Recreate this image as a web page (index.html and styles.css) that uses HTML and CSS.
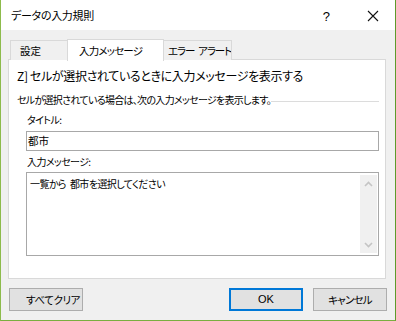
FILE: index.html
```html
<!DOCTYPE html>
<html lang="ja">
<head>
<meta charset="utf-8">
<link rel="stylesheet" href="styles.css">
</head>
<body>
<div class="window">
  <div class="titlebar">
    <span class="title">データの入力規則</span>
    <span class="help">?</span>
    <span class="close">
      <svg width="12" height="12" viewBox="0 0 12 12"><path d="M1 1 L11 11 M11 1 L1 11" stroke="#111" stroke-width="1.1" fill="none"/></svg>
    </span>
  </div>
  <div class="content">
    <div class="tabs">
      <div class="tab">設定</div>
      <div class="tab active">入力メッセージ</div>
      <div class="tab">エラー<span class="gap"> </span>アラート</div>
    </div>
    <div class="panel">
      <div class="check">Z] セルが選択されているときに入力メッセージを表示する</div>
      <div class="group"><span>セルが選択されている場合は、次の入力メッセージを表示します。</span><i class="rule"></i></div>
      <div class="label">タイトル:</div>
      <div class="input">都市</div>
      <div class="label label2">入力メッセージ:</div>
      <div class="textarea">
        <div class="ta-text">一覧から<span class="gap"> </span>都市を選択してください</div>
        <div class="scroll">
          <svg width="9" height="6" viewBox="0 0 9 6"><polyline points="1,5 4.5,1.5 8,5" stroke="#c4c4c4" stroke-width="1.6" fill="none"/></svg>
          <svg width="9" height="6" viewBox="0 0 9 6"><polyline points="1,1 4.5,4.5 8,1" stroke="#c4c4c4" stroke-width="1.6" fill="none"/></svg>
        </div>
      </div>
    </div>
    <div class="buttons">
      <div class="btn clear">すべてクリア</div>
      <div class="spacer"></div>
      <div class="btn ok">OK</div>
      <div class="btn cancel">キャンセル</div>
    </div>
  </div>
</div>
</body>
</html>
```
FILE: styles.css
```css
html, body {
  margin: 0;
  padding: 0;
}
body {
  width: 396px;
  height: 321px;
  overflow: hidden;
  font-family: "Noto Sans CJK JP", "Noto Sans", sans-serif;
  font-feature-settings: "palt";
  color: #000;
}
.window {
  box-sizing: border-box;
  width: 396px;
  height: 321px;
  border-left: 1px solid #8dbb4c;
  border-right: 1px solid #5f9a2a;
  border-bottom: 1px solid #7aae3f;
  display: flex;
  flex-direction: column;
  background: #f0f0f0;
}
.titlebar {
  height: 30px;
  background: #fff;
  display: flex;
  align-items: center;
  flex: none;
}
.title {
  font-size: 11px;
  letter-spacing: -0.3px;
  margin-left: 10px;
  flex: 1;
  line-height: 1;
  padding-top: 1px;
  white-space: nowrap;
}
.help {
  font-family: "Liberation Sans", sans-serif;
  font-size: 13px;
  margin-right: 37px;
  padding-top: 2px;
}
.close {
  display: flex;
  margin-right: 16px;
  padding-top: 2px;
}
.content {
  flex: 1;
  display: flex;
  flex-direction: column;
  padding: 9px 9px 0 7px;
}
.tabs {
  display: flex;
  height: 21px;
  padding-left: 2px;
  align-items: flex-end;
  position: relative;
  z-index: 1;
  margin-bottom: -1px;
}
.tab {
  box-sizing: border-box;
  height: 20px;
  border: 1px solid #d9d9d9;
  border-bottom: none;
  background: #f0f0f0;
  font-size: 10.5px;
  letter-spacing: -0.8px;
  line-height: 19px;
  padding: 0 8px;
  white-space: nowrap;
  overflow: hidden;
}
.tab:first-child {
  width: 57px;
  padding-left: 9px;
  border-right: none;
  letter-spacing: 0;
}
.tab.active {
  height: 22px;
  width: 97px;
  background: #fff;
  padding-left: 11px;
  margin-bottom: -1px;
  line-height: 21px;
}
.tab:last-child {
  width: 68px;
  border-left: none;
  padding-left: 4px;
  padding-right: 0;
  letter-spacing: -1.1px;
}
.panel {
  box-sizing: border-box;
  height: 220px;
  width: 378px;
  background: #fff;
  border: 1px solid #d9d9d9;
  display: flex;
  flex-direction: column;
  padding: 0 6px 0 8px;
}
.check {
  font-size: 12px;
  letter-spacing: -0.35px;
  margin-top: 7px;
  line-height: 17px;
  height: 17px;
  white-space: nowrap;
}
.group {
  display: flex;
  align-items: center;
  font-size: 10px;
  letter-spacing: -0.7px;
  margin-top: 9px;
  line-height: 14px;
  height: 14px;
  white-space: nowrap;
}
.rule {
  flex: 1;
  border-top: 1px solid #dcdcdc;
  margin-top: 2px;
}
.label {
  font-size: 10px;
  letter-spacing: -0.6px;
  line-height: 14px;
  margin: 6px 0 0 10px;
  height: 14px;
}
.input {
  box-sizing: border-box;
  margin: 4px 0 0 9px;
  height: 20px;
  border: 1px solid #a8a8a8;
  font-size: 10.5px;
  line-height: 18px;
  padding-left: 1px;
}
.label2 {
  margin-top: 4px;
}
.textarea {
  box-sizing: border-box;
  margin: 3px 0 0 9px;
  height: 84px;
  border: 1px solid #a8a8a8;
  display: flex;
  padding: 2px 1px 2px 3px;
}
.ta-text {
  flex: 1;
  font-size: 10px;
  letter-spacing: -0.6px;
  line-height: 14px;
  padding-top: 2px;
  white-space: nowrap;
}
.gap {
  display: inline-block;
  width: 4px;
}
.scroll {
  width: 17px;
  background: #f0f0f0;
  display: flex;
  flex-direction: column;
  justify-content: space-between;
  align-items: center;
  padding: 6px 0 5px;
  box-sizing: border-box;
}
.scroll svg {
  display: block;
}
.buttons {
  display: flex;
  margin-top: 9px;
  padding-left: 1px;
}
.spacer {
  flex: 1;
}
.btn {
  box-sizing: border-box;
  width: 74px;
  height: 23px;
  background: #e1e1e1;
  border: 1px solid #adadad;
  font-size: 10.5px;
  line-height: 21px;
  text-align: center;
  white-space: nowrap;
}
.btn.clear {
  text-align: left;
  padding-left: 16px;
  letter-spacing: -0.4px;
  overflow: hidden;
}
.btn.ok {
  border: 2px solid #0078d7;
  line-height: 19px;
  font-family: "Liberation Sans", sans-serif;
  font-size: 11px;
  margin-right: 10px;
}
.btn.cancel {
  margin-right: -1px;
  letter-spacing: -0.8px;
}
```
